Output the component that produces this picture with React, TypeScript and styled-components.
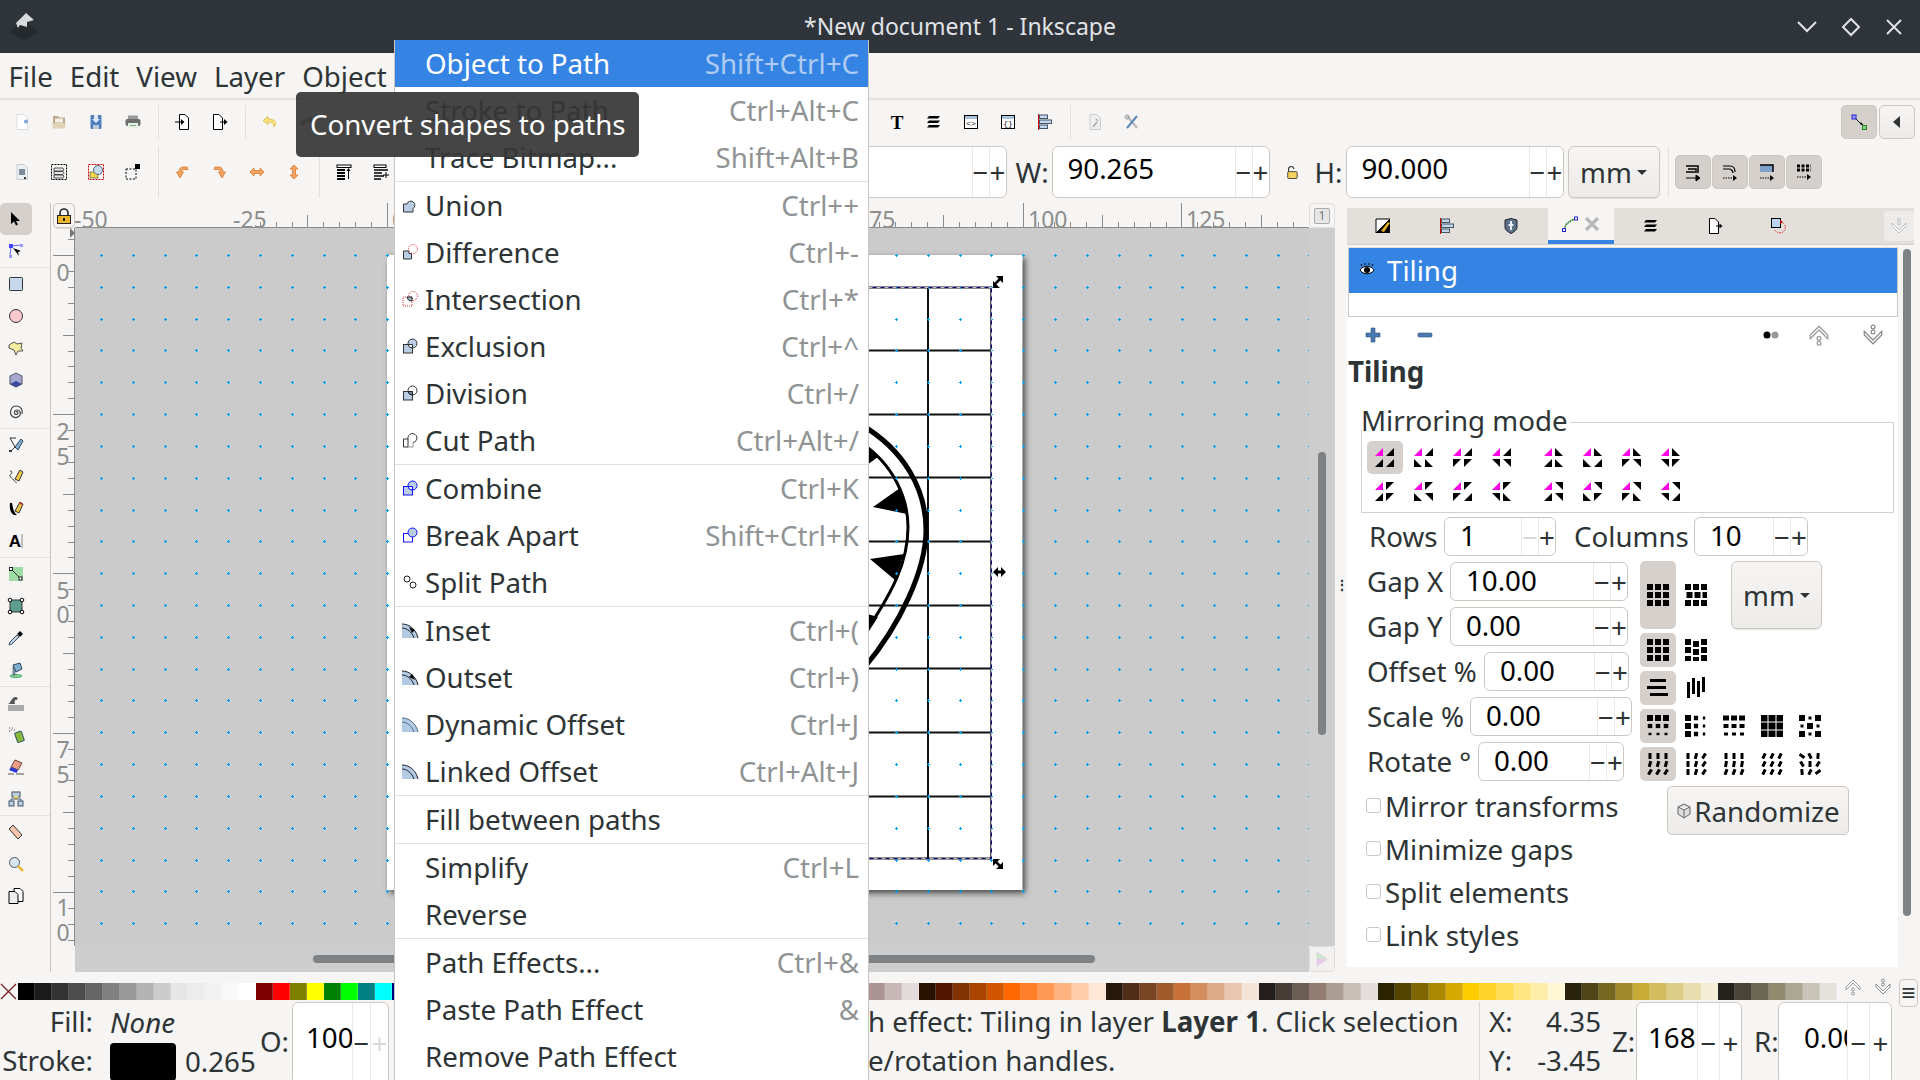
import React from "react";
import styled, {createGlobalStyle} from "styled-components";

const FONT = `"Noto Sans", "Open Sans", sans-serif`;
const TEXT = "#2e3436";
const BG = "#f6f5f4";
const BORDER = "#cdc7c2";
const BLUE = "#3584e4";

const paper = "M3 .5h7L13.5 4v11.5H3z";
const docLine = "M4.5.5H10L13.5 4v11.5h-9z";
const win = (label: string) => <>
    <rect x="1.5" y="1.5" width="13" height="13" fill="#fff" stroke="#000"/>
    <rect x="2" y="2" width="12" height="3" fill="#a9c3de"/>
    <text x="8" y="12" fontSize="8" fontFamily="Liberation Mono" textAnchor="middle" fill="#222">{label}</text>
</>;
const stack = <>
    <path d="M3 2h11l-2 2.5H1z" fill="#000"/>
    <path d="M3 6.5h11l-2 2.5H1z" fill="#000"/>
    <path d="M3 11h11l-2 2.5H1z" fill="#000"/>
</>;
const alignBars = <>
    <path d="M1.5 0v16" stroke="#c00" fill="none"/>
    <rect x="2.5" y="1" width="8" height="3.5" fill="#c3d7ec" stroke="#456"/>
    <rect x="2.5" y="6" width="12" height="3.5" fill="#c3d7ec" stroke="#456"/>
    <rect x="2.5" y="11" width="8" height="3.5" fill="#c3d7ec" stroke="#456"/>
</>;
const arcs = (dark: string, extra?: React.ReactNode) => <>
    <path d="M0 2c7 0 14 5 16 14H0z" fill="#b3cae3"/>
    <path d="M0 2c7 0 14 5 16 14M0 6c5 0 10 4 12 10" fill="none" stroke={dark} strokeWidth="1"/>
    {extra}
</>;
const orange = {fill: "#f4a460", stroke: "#d9782d", strokeWidth: .8};
const bucket = <>
    <path d="M5 3l7-2 2 6-6 3z" fill="#7fb0d6" stroke="#345"/>
    <ellipse cx="8" cy="14" rx="6" ry="1.5" fill="#8fd18f" stroke="#4a7"/>
    <path d="M5 5v8h2V8z" fill="#8ab" stroke="#345" strokeWidth=".6"/>
</>;

const icons: Record<string, React.ReactNode> = {
    new: <><path d={paper} fill="#fff" stroke="#ddd"/><circle cx="12" cy="7.5" r="2" fill="#7fa5d4"/></>,
    open: <><path d="M2 2h5l1 1.5h6v10H2z" fill="#bba98a"/><rect x="4" y="4.5" width="8" height="4" fill="#f2efe8"/><path d="M1 9h14l-1 5.5H2z" fill="#e0d2b8"/></>,
    save: <><rect x="2.5" y="1" width="11" height="14" rx="1" fill="#4f81bd"/><path d="M6 1h4v4h2L8 9 4 5h2z" fill="#dfe9f5"/><rect x="5" y="11" width="6" height="4" fill="#bcd"/></>,
    print: <><rect x="3" y="1.5" width="10" height="4" fill="#9a9a9a"/><rect x=".5" y="5" width="15" height="7" rx="2" fill="#6d6d6d"/><rect x="3" y="9" width="10" height="5" fill="#e6efe4"/><rect x="5" y="11" width="6" height="1" fill="#7aa874"/></>,
    import: <><path d={docLine} fill="#fff" stroke="#000"/><path d="M0 8h7" stroke="#000"/><path d="M6 5l3.5 3L6 11z" fill="#000"/></>,
    export: <><path d="M1.5.5H7L10.5 4v11.5h-9z" fill="#fff" stroke="#000"/><path d="M8 8h5" stroke="#000"/><path d="M12 5l3.5 3-3.500 3z" fill="#000"/></>,
    undo: <path d="M6 2.500L1 6.500l5 4V8c4 0 6 1.500 6 5 3.500-4 1.500-8-6-8z" fill="#f7e27c" stroke="#d9b84a" strokeWidth=".8"/>,
    redo: <path d="M10 2.500l5 4-5 4V8c-4 0-6 1.500-6 5C.5 9 2.500 5 10 5z" fill="#7a7a4a"/>,
    page: <><path d={paper} fill="#eef1f4" stroke="#c8ccd0"/><rect x="5" y="5" width="6" height="6" fill="#7d8a97"/><rect x="10" y="13" width="2" height="2" fill="#333"/></>,
    selAll: <><rect x=".5" y=".5" width="15" height="15" fill="none" stroke="#000" strokeDasharray="2 1"/><path d="M3 4h9l1 2-1 1H3zM3 7.500h9l1 2-1 1H3zM3 11h9l1 1-1 2H3z" fill="#e6e6e6" stroke="#333" strokeWidth=".8"/></>,
    selSame: <><rect x=".5" y=".5" width="15" height="15" fill="#fff" stroke="#c00" strokeDasharray="2 1"/><rect x="2" y="8" width="8" height="6" fill="#f7d84a" stroke="#333" strokeWidth=".6"/><circle cx="10" cy="6" r="4.500" fill="#c7dcef" stroke="#567"/></>,
    deselect: <><rect x="1" y="5" width="10" height="10" fill="none" stroke="#000" strokeDasharray="2 1.500"/><rect x="10" y="0" width="5" height="5" fill="#000"/></>,
    rotL: <path d="M12 3H8C5.500 3 4 5 4 8H1.500L5 14l3.500-6H6.500c0-1.500 1-2.500 2-2.500H13z" {...orange}/>,
    rotR: <path d="M3 3h4c2.500 0 4 2 4 5h2.500L10 14 6.500 8h2c0-1.500-1-2.500-2-2.500H2z" {...orange}/>,
    flipH: <path d="M1 8l4-4v2.500h6V4l4 4-4 4V9.500H5V12z" {...orange}/>,
    flipV: <path d="M8 1l4 4H9.500v6H12l-4 4-4-4h2.500V5H4z" {...orange}/>,
    top: <><rect x="1" y="1" width="14" height="2.500" fill="#fff" stroke="#000"/><path d="M1 6h8M1 9h8M1 12h8M1 15h8" stroke="#000" strokeWidth="2"/><path d="M12.500 15V6" stroke="#000"/><path d="M10.500 7l2-3 2 3z" fill="#000"/></>,
    up: <><rect x="1" y="1" width="12" height="2.500" fill="#fff" stroke="#000"/><path d="M1 6h14M1 9h8M1 12h10M1 15h7" stroke="#000" strokeWidth="1.500"/><path d="M13 8v6M10 11h6" stroke="#000"/></>,
    text: <text x="8" y="14.500" fontSize="19" fontWeight="700" fontFamily="Liberation Serif" textAnchor="middle" fill="#000">T</text>,
    layers: stack,
    xml: win("<>"),
    css: win("{}"),
    align: alignBars,
    docProp: <><path d={paper} fill="#eee" stroke="#ccc"/><path d="M6 13l4-5M9 5l2 2" stroke="#aaa" strokeWidth="1.500"/></>,
    tools: <><path d="M3 2l10 12" stroke="#bbb" strokeWidth="2.500"/><path d="M13 2L3 14" stroke="#5d86b8" strokeWidth="2"/><circle cx="3" cy="3" r="2" fill="none" stroke="#999"/></>,
    snap: <><path d="M3 3l9 9" stroke="#000" strokeWidth="1"/><path d="M10 8l3 4-4-2z" fill="#000"/><rect x="1" y="1" width="4" height="4" fill="#99f" stroke="#22c"/><rect x="11.500" y="11.500" width="4" height="4" fill="#8c8" stroke="#282"/></>,
    back: <path d="M11 2v12L4 8z" fill="#2e3436"/>,
    cornerA: <><path d="M1 2h12v7M3 5h8v4M1 8h9" fill="none" stroke="#000" strokeWidth="1.500"/><path d="M1 14h12M11 11l4 3-4 3z" stroke="#000"/></>,
    cornerB: <><path d="M1 2h7c3 0 5 2 5 6M1 5h6c2 0 4 2 4 4" fill="none" stroke="#000" strokeWidth="1.200"/><path d="M1 14h12" stroke="#000" strokeDasharray="1.500 1"/><path d="M11 11l4 3-4 3z" fill="#000"/></>,
    cornerC: <><path d="M1 1h13v7H1z" fill="#7da0c8"/><path d="M1 1h13v7" fill="none" stroke="#000" strokeWidth="1.500"/><path d="M1 14h12" stroke="#000" strokeDasharray="1.500 1"/><path d="M11 11l4 3-4 3z" fill="#000"/></>,
    cornerD: <><path d="M1 2h14M1 6h14" stroke="#000" strokeWidth="3" strokeDasharray="3 1.500"/><path d="M1 13h12" stroke="#000" strokeDasharray="1.500 1"/><path d="M11 10l4 3-4 3z" fill="#000"/></>,
    tabFill: <><path d="M1 1h14L1 15z" fill="#fff" stroke="#000"/><path d="M15 1v14H1z" fill="#000"/><path d="M6 13l7-9 2 1-6 9z" fill="#e6b422"/></>,
    tabShield: <><path d="M2 2l6-1.500L14 2v7c0 3-3 5-6 6.500C5 14 2 12 2 9z" fill="#5c7085" stroke="#223"/><path d="M8 3v9M5.500 7h5" stroke="#e8eef4" strokeWidth="2"/></>,
    tabLpe: <><path d="M2 14C3 8 8 4 14 3" fill="none" stroke="#2e7d32" strokeWidth="1.500" strokeDasharray="2 .6"/><rect x=".5" y="12.500" width="3" height="3" fill="#fff" stroke="#22c"/><rect x="12.500" y="1" width="3" height="3" fill="#fff" stroke="#22c"/></>,
    close: <path d="M2 2l12 12M14 2L2 14" stroke="#b9b9b9" strokeWidth="3.500"/>,
    tabExport: <><path d="M2.500.5H8L11.500 4v11.500h-9z" fill="#fff" stroke="#000"/><path d="M9 8h4" stroke="#000"/><path d="M12.500 5.500l3 2.500-3 2.500z" fill="#000"/></>,
    tabTrans: <><rect x=".5" y=".5" width="9" height="9" fill="#bcd6f0" stroke="#000"/><path d="M10 4a5.500 5.500 0 1 1-6 8" fill="none" stroke="#d22" strokeDasharray="1.500 1"/><path d="M9 2l3 2-3 2z" fill="#c00"/></>,
    down: <g fill="none" stroke="#bdbdbd"><circle cx="8" cy="1.500" r="1.500"/><circle cx="8" cy="5.500" r="1.500"/><path d="M1 5l7 7 7-7v3l-7 7-7-7z" fill="#fff"/></g>,
    upArrow: <g fill="none" stroke="#9a9a9a"><circle cx="8" cy="14.500" r="1.500"/><circle cx="8" cy="10.500" r="1.500"/><path d="M1 11l7-7 7 7V8L8 1 1 8z" fill="#fff"/></g>,
    downDark: <g fill="none" stroke="#8a8a8a"><circle cx="8" cy="1.500" r="1.500"/><circle cx="8" cy="5.500" r="1.500"/><path d="M1 5l7 7 7-7v3l-7 7-7-7z" fill="#fff"/></g>,
    plus: <path d="M6 1h4v5h5v4h-5v5H6v-5H1V6h5z" fill="#4a78b0" stroke="#32567f" strokeWidth=".6"/>,
    minus: <rect x="1" y="6" width="14" height="4" rx="1" fill="#4a78b0" stroke="#32567f" strokeWidth=".6"/>,
    dots: <><circle cx="4" cy="8" r="3.500" fill="#000"/><circle cx="12" cy="8" r="3.500" fill="#999"/></>,
    eye: <><path d="M1 8c3-5 11-5 14 0-3 5-11 5-14 0z" fill="#fff" stroke="#000"/><circle cx="8" cy="8" r="3" fill="#000"/><path d="M3 4L2 2M6 3V1M10 3V1M13 4l1-2" stroke="#000"/></>,
    selTool: <path d="M3 1v12l3-2.500 2 4 2-1-2-3.500h4z" fill="#000"/>,
    nodeTool: <><path d="M3 3l10-1M3 3L2 13" stroke="#66f"/><rect x="1" y="1" width="4" height="4" fill="#44f"/><rect x="12" y="1" width="3" height="3" fill="#99f"/><rect x="1" y="12" width="3" height="3" fill="#99f"/><path d="M5 5l8 3-3 1 1 4z" fill="#000"/></>,
    rect: <><rect x="1.500" y="1.500" width="13" height="13" rx="1" fill="#c6d9ec" stroke="#333"/></>,
    ellipse: <circle cx="8" cy="8" r="6.500" fill="#f7c9cc" stroke="#333"/>,
    star: <path d="M1 5l5-3 3 2 5-1-1 5 2 3-5 0-2 4-2-5-5-2z" fill="#f6eda0" stroke="#555"/>,
    box3d: <><path d="M8 1l6 3v8l-6 3-6-3V4z" fill="#a5a8cf" stroke="#556"/><path d="M2 12l6-3 6 3-6 3z" fill="#3c4aa0"/></>,
    spiral: <path d="M8 8c1-1 2 0 2 1s-2 2-3 1-1-4 2-4 4 3 3 5-5 4-8 1S3 2 8 2s7 4 6 8" fill="none" stroke="#444" strokeWidth="1.200"/>,
    pencil: <><path d="M2 1h6M2 1l5 9-3 3" fill="none" stroke="#333"/><rect x="1" y="13" width="3" height="2" fill="#333"/><path d="M7 10l6-8 2 2-5 9z" fill="#7fb0d6" stroke="#345"/></>,
    pen: <><path d="M2 2c3 0 2 3 0 4s8 8 6 8" fill="none" stroke="#333"/><path d="M7 10l5-9 3 2-4 9z" fill="#f3c84a" stroke="#333"/></>,
    callig: <><path d="M2 2c-1 8 2 13 7 12-4-3-4-8-5-12z" fill="#000"/><path d="M7 10l5-9 3 2-4 9z" fill="#e8c24a" stroke="#333"/><path d="M12 1l3 2-1 1-3-2z" fill="#c33"/></>,
    a: <><text x="7" y="14" fontSize="17" fontWeight="700" fontFamily="Liberation Sans" textAnchor="middle" fill="#000">A</text><path d="M14 1v14" stroke="#888"/></>,
    grad: <><rect x="1" y="1" width="14" height="14" fill="#9fdca5"/><path d="M3 3l10 10" stroke="#333"/><rect x="1.500" y="1.500" width="3" height="3" fill="#fff" stroke="#222"/><rect x="11" y="11" width="3" height="3" fill="#fff" stroke="#222"/></>,
    mesh: <><rect x="2" y="2" width="12" height="12" fill="#5e9e8e" stroke="#333"/><circle cx="2" cy="2" r="1.800" fill="#fff" stroke="#000"/><circle cx="14" cy="2" r="1.800" fill="#fff" stroke="#000"/><circle cx="2" cy="14" r="1.800" fill="#fff" stroke="#000"/><circle cx="14" cy="14" r="1.800" fill="#fff" stroke="#000"/></>,
    dropper: <><path d="M1 15l1-3 7-7 2 2-7 7z" fill="#bcd" stroke="#456"/><path d="M9 4l3-3 3 3-3 3z" fill="#000"/></>,
    bucket,
    tweak: <><path d="M0 9c3-1 3-6 7-7 3 0 3 2 2 3-2-1-3 1-2 4" fill="#555"/><rect x="0" y="10" width="16" height="6" fill="#aaa"/></>,
    spray: <><rect x="8" y="5" width="7" height="10" rx="1" fill="#8ab83a" stroke="#356" transform="rotate(-20 11 10)"/><path d="M1 1h1M3 3h1M1 4h1M4 1h1M6 3h1" stroke="#444"/></>,
    eraser: <><path d="M7 1l7 3-4 7-7-3z" fill="#ec9e85" stroke="#643"/><path d="M3 8l7 3-1.500 3L1 11z" fill="#2a3ad8"/><path d="M0 15h6M8 15h8" stroke="#555"/></>,
    lpe: <><rect x="4" y="1" width="8" height="5" fill="#b8cfe6" stroke="#456"/><rect x="6" y="5" width="4" height="3" fill="#f2d36a"/><rect x="1" y="10" width="5" height="5" fill="#b8cfe6" stroke="#456"/><rect x="10" y="10" width="5" height="5" fill="#b8cfe6" stroke="#456"/><path d="M3 10V8h10v2" fill="none" stroke="#456"/></>,
    measure: <path d="M5 1l9 10-4 4L1 5z" fill="#f4c7ab" stroke="#333"/>,
    zoom: <><circle cx="6.500" cy="6.500" r="5" fill="#d7e6f2" stroke="#555"/><path d="M10 10l5 5" stroke="#e8b73c" strokeWidth="2.500"/></>,
    pages: <><path d="M6 .5h6l3 3v10H6z" fill="#fff" stroke="#000"/><path d="M1 3.500h6l3 3v9H1z" fill="#eee" stroke="#000"/></>,
    union: <path d="M1.500 7H5a4 4 0 1 1 6 4.500V15H1.500z" fill="#b9cde5" stroke="#333"/>,
    difference: <><path d="M1.500 7H7v2.500h2.500V15h-8z" fill="#b9cde5" stroke="#333"/><circle cx="11" cy="5" r="4.500" fill="#fff" stroke="#d33" strokeDasharray="1 1"/></>,
    intersection: <><rect x="1" y="6" width="9" height="9" fill="none" stroke="#d33" strokeDasharray="1 1"/><circle cx="11" cy="5" r="4.500" fill="none" stroke="#d33" strokeDasharray="1 1"/><path d="M5 6h5v4a5 5 0 0 1-5-4z" fill="#9db4cc" stroke="#222"/></>,
    exclusion: <><rect x="1.500" y="6.500" width="9" height="8.500" fill="#b9cde5" stroke="#333"/><circle cx="10.500" cy="5.500" r="4.500" fill="#b9cde5" stroke="#333"/><path d="M6 6.500h4.500V10A4.500 4.500 0 0 1 6 6.500z" fill="#fff" stroke="#333"/></>,
    division: <><rect x="1.500" y="6.500" width="9" height="8.500" fill="#b9cde5" stroke="#333"/><circle cx="10.500" cy="5.500" r="4.500" fill="#fff" stroke="#333"/><path d="M6 6.500h4.500V10A4.500 4.500 0 0 1 6 6.500z" fill="#6f87a6" stroke="#222"/></>,
    cutPath: <><path d="M1.500 7H6v8H1.500z" fill="#fff" stroke="#333"/><path d="M6 7a4.500 4.500 0 1 1 5 3.500" fill="none" stroke="#333"/><path d="M6 15h5v-4" fill="none" stroke="#999"/></>,
    combine: <><rect x="1.500" y="6.500" width="9" height="8.500" fill="#b9cde5" stroke="#11f"/><circle cx="10.500" cy="5.500" r="4.500" fill="#b9cde5" stroke="#11f"/><path d="M6 6.500h4.500V10A4.500 4.500 0 0 1 6 6.500z" fill="#fff" stroke="#11f"/></>,
    breakApart: <><rect x="1.500" y="6.500" width="9" height="8.500" fill="#fff" stroke="#11f"/><circle cx="10.500" cy="5.500" r="4.500" fill="#b9cde5" stroke="#11f"/></>,
    split: <><circle cx="5" cy="5" r="3" fill="#fff" stroke="#222"/><circle cx="11" cy="11" r="3" fill="#fff" stroke="#222"/></>,
    inset: arcs("#222", <path d="M7 5l6 3-3 3z" fill="#000"/>),
    outset: arcs("#222", <path d="M13 11L7 8l3-3z" fill="#000"/>),
    dynamic: arcs("#4a6a90"),
    linked: arcs("#223"),
    randomize: <path d="M2 4l6-3 6 3v7l-6 4-6-4zM2 4l6 3 6-3M8 7v8" fill="#ddd" stroke="#666"/>,
};

// corners: a = lower right, b = lower left, c = upper left, d = upper right
const CORNERS: Record<string, string> = {
    a: "8,0 8,8 0,8",
    b: "0,0 8,8 0,8",
    c: "0,0 8,0 0,8",
    d: "0,0 8,0 8,8",
};

const MIRRORS = [
    "aaaa", "aabb", "aacc", "aadd", "abab", "abba", "abcd", "abdc",
    "acac", "acbd", "acca", "acdb", "adad", "adbc", "adcb", "adda",
];

function Mirror({code}: {code: string}) {
    const spots = [[0, 0], [11, 0], [0, 11], [11, 11]];
    return <svg width={20} height={20} viewBox="0 0 20 20">
        {spots.map((s, i) => <polygon key={i} points={CORNERS[code[i]]} fill={i === 0 ? "#ff00e6" : "#000"}
                                      transform={`translate(${s[0]} ${s[1]})`}/>)}
    </svg>;
}

type Cell = {x?: number; y?: number; w?: number; h?: number; r?: number};

function Tile({cell}: {cell: (col: number, row: number) => Cell}) {
    const parts = [];
    for (let row = 0; row < 3; row++) {
        for (let col = 0; col < 3; col++) {
            const c = cell(col, row);
            const w = c.w ?? 6;
            const h = c.h ?? 6;
            const x = col * 8 + 3 - w / 2 + (c.x ?? 0);
            const y = row * 8 + 3 - h / 2 + (c.y ?? 0);
            parts.push(<rect key={col + "-" + row} x={x} y={y} width={w} height={h} fill="#000"
                             transform={c.r ? `rotate(${c.r} ${x + w / 2} ${y + h / 2})` : undefined}/>);
        }
    }
    return <svg width={22} height={22} viewBox="0 0 22 22">{parts}</svg>;
}

const bar = {w: 3, h: 6};
const tiles = {
    plain: () => ({}),
    brickX: (_: number, r: number) => (r === 1 ? {x: 1.500} : {}),
    brickY: (c: number, r: number) => (c === 1 ? {y: 2} : r === 2 && c === 0 ? {x: 0, y: 1} : {}),
    rowScale: (_: number, r: number) => ({w: 6 - r * 1.500, h: 6 - r * 1.800}),
    colScale: (c: number) => ({w: 6 - c * 1.800, h: 6 - c * 1.500}),
    rowSmall: (_: number, r: number) => ({w: 6 - r, h: 5 - r}),
    big: () => ({w: 7, h: 7}),
    rand: (c: number, r: number) => ({w: (c + r) % 2 ? 3 : 6, h: (c + r) % 2 ? 3 : 6}),
    slash: (c: number, r: number) => ({...bar, r: r * 15}),
    slashCol: (c: number) => ({...bar, r: c * 15}),
    slashSmall: (_: number, r: number) => ({...bar, r: r * 10}),
    slashAll: () => ({...bar, r: 25}),
    slashRand: (c: number, r: number) => ({...bar, r: (c - 1) * 30 + (r - 1) * 25}),
};

function Centered() {
    return <svg width={22} height={22} viewBox="0 0 22 22">
        <rect x="3" y="2" width="16" height="3"/>
        <rect x="0" y="9" width="19" height="3"/>
        <rect x="3" y="16" width="18" height="3"/>
    </svg>;
}

function Columned() {
    return <svg width={22} height={22} viewBox="0 0 22 22">
        <rect x="2" y="5" width="3" height="16"/>
        <rect x="7" y="1" width="3" height="16"/>
        <rect x="12" y="4" width="3" height="16"/>
        <rect x="17" y="0" width="3" height="15"/>
    </svg>;
}

const Ic = ({n, s = 16}: {n: string; s?: number}) =>
    <svg width={s} height={s} viewBox="0 0 16 16" style={{overflow: "visible"}}>{icons[n]}</svg>;

const PALETTE = [
    "000000", "1a1a1a", "333333", "4d4d4d", "666666", "808080", "999999", "b3b3b3", "cccccc", "e6e6e6", "ececec",
    "f2f2f2", "f9f9f9", "ffffff", "800000", "ff0000", "808000", "ffff00", "008000", "00ff00", "008080", "00ffff",
    "000080", "0000ff", "800080", "ff00ff", "2b0000", "550000", "800000", "aa0000", "d40000", "ff0000", "ff2a2a",
    "ff5555", "ff8080", "ffaaaa", "ffd5d5", "280b0b", "501616", "782121", "a02c2c", "c83737", "d35f5f", "de8787",
    "e9afaf", "f4d7d7", "241c1c", "483737", "6c5353", "917c6f", "ac9393", "c8b7b7", "e3dbdb", "2b1100", "501600",
    "803300", "aa4400", "d45500", "ff6600", "ff7f2a", "ff9955", "ffb380", "ffccaa", "ffe6d5", "28170b", "502d16",
    "784421", "a05a2c", "c87137", "d38d5f", "deaa87", "e9c6af", "f4e3d7", "241f1c", "483e37", "6c5d53", "917c6f",
    "ac9d93", "c8beb7", "e3dedb", "2b2200", "554400", "806600", "aa8800", "d4aa00", "ffcc00", "ffd42a", "ffdd55",
    "ffe680", "ffeeaa", "fff6d5", "28220b", "504416", "786721", "a0892c", "c8ab37", "d3bc5f", "decd87", "e9ddaf",
    "f4eed7", "24221c", "484537", "6c6753", "918a6f", "aca793", "c8c4b7", "e3e2db",
];

type MenuEntry = {label?: string; keys?: string; icon?: string; active?: boolean; sep?: boolean};

const MENU: MenuEntry[] = [
    {label: "Object to Path", keys: "Shift+Ctrl+C", active: true},
    {label: "Stroke to Path", keys: "Ctrl+Alt+C"},
    {label: "Trace Bitmap...", keys: "Shift+Alt+B"},
    {sep: true},
    {label: "Union", keys: "Ctrl++", icon: "union"},
    {label: "Difference", keys: "Ctrl+-", icon: "difference"},
    {label: "Intersection", keys: "Ctrl+*", icon: "intersection"},
    {label: "Exclusion", keys: "Ctrl+^", icon: "exclusion"},
    {label: "Division", keys: "Ctrl+/", icon: "division"},
    {label: "Cut Path", keys: "Ctrl+Alt+/", icon: "cutPath"},
    {sep: true},
    {label: "Combine", keys: "Ctrl+K", icon: "combine"},
    {label: "Break Apart", keys: "Shift+Ctrl+K", icon: "breakApart"},
    {label: "Split Path", icon: "split"},
    {sep: true},
    {label: "Inset", keys: "Ctrl+(", icon: "inset"},
    {label: "Outset", keys: "Ctrl+)", icon: "outset"},
    {label: "Dynamic Offset", keys: "Ctrl+J", icon: "dynamic"},
    {label: "Linked Offset", keys: "Ctrl+Alt+J", icon: "linked"},
    {sep: true},
    {label: "Fill between paths"},
    {sep: true},
    {label: "Simplify", keys: "Ctrl+L"},
    {label: "Reverse"},
    {sep: true},
    {label: "Path Effects...", keys: "Ctrl+&"},
    {label: "Paste Path Effect", keys: "&"},
    {label: "Remove Path Effect"},
];

const TOOL_GROUPS = [
    ["selTool", "nodeTool"],
    ["rect", "ellipse", "star", "box3d", "spiral"],
    ["pencil", "pen", "callig", "a"],
    ["grad", "mesh", "dropper", "bucket"],
    ["tweak", "spray", "eraser", "lpe"],
    ["measure", "zoom", "pages"],
];

function Spin({w, h = 39, value, off, pad = 15, btn = 17}: {w: number; h?: number; value: string; off?: boolean; pad?: number; btn?: number}) {
    return <SpinBox $w={w} $h={h}>
        <SpinEntry $h={h} $pad={pad}>{value}</SpinEntry>
        <SpinBtn $w={btn} $off={off && h < 60}>−</SpinBtn>
        <SpinBtn $w={btn} $off={off && h > 60}>+</SpinBtn>
    </SpinBox>;
}

function HorizontalRuler() {
    const lines = [];
    for (let k = -48; k <= 46; k++) {
        const x = Math.round(1022.5 + k * 15.89) + .5;
        const len = k % 10 === 0 ? 25 : k % 5 === 0 ? 13 : 6;
        lines.push(<line key={k} x1={x} x2={x} y1={228 - len} y2={228} stroke="#8b8b8b"/>);
    }
    const labels = [[-50, 69], [-25, 228], [0, 387], [25, 546], [50, 705], [75, 864], [100, 1023], [125, 1181]];
    return <svg width={1234} height={25} viewBox="75 203 1234 25" style={{display: "block"}}>
        {lines}
        <line x1={75} x2={1309} y1={227.5} y2={227.5} stroke="#8b8b8b"/>
        {labels.map(l => <text key={l[0]} x={l[1] + 5} y={228} fontSize={23} fontFamily={FONT} fill="#8c8e8e">{l[0]}</text>)}
    </svg>;
}

function VerticalRuler() {
    const lines = [];
    for (let k = -1; k <= 44; k++) {
        const y = Math.round(255 + k * 15.92) + .5;
        const x1 = k % 10 === 0 ? 53 : k % 5 === 0 ? 63 : 68;
        lines.push(<line key={k} x1={x1} x2={74} y1={y} y2={y} stroke="#8b8b8b"/>);
    }
    const digits = [["0", 281], ["2", 440], ["5", 465], ["5", 599], ["0", 623], ["7", 758], ["5", 783], ["1", 916], ["0", 941]];
    return <svg width={24} height={718} viewBox="51 228 24 718" style={{display: "block"}}>
        {lines}
        <line x1={74.500} x2={74.500} y1={228} y2={946} stroke="#8b8b8b"/>
        <path d="M70 228l5 5-5 5z" fill="#777"/>
        {digits.map((d, i) => <text key={i} x={63} y={d[1]} fontSize={23} fontFamily={FONT} textAnchor="middle"
                                    fill="#8c8e8e">{d[0]}</text>)}
    </svg>;
}

function Drawing() {
    let grid = "";
    for (let c = 0; c < 39; c++) {
        for (let r = 0; r < 23; r++) {
            const x = Math.round(101 + c * 31.8) + .5;
            const y = Math.round(255 + r * 31.82) + .5;
            grid += `M${x - 1.500} ${y}h3M${x} ${y - 1.500}v3`;
        }
    }
    const rows = [287, 350, 414, 477, 541, 605, 668, 732, 796, 858];
    return <svg width={1234} height={718} viewBox="75 228 1234 718" style={{display: "block"}}>
        <defs>
            <filter id="pageShadow" x="-5%" y="-5%" width="110%" height="110%">
                <feGaussianBlur stdDeviation="3"/>
            </filter>
        </defs>
        <rect x={75} y={228} width={1234} height={718} fill="#cbcbcb"/>
        <rect x={390} y={258} width={635} height={635} fill="#444" filter="url(#pageShadow)"/>
        <rect x={387} y={255} width={635.500} height={635} fill="#fff"/>
        {rows.map(y => <line key={y} x1={400} x2={991} y1={y + .5} y2={y + .5} stroke="#111" strokeWidth="2"/>)}
        <line x1={928} x2={928} y1={287} y2={858} stroke="#111" strokeWidth="2"/>
        <line x1={991} x2={991} y1={287} y2={858} stroke="#111" strokeWidth="1.500"/>
        <path d="M860 424C905 450 926 490 926 530C926 570 900 625 864 668" fill="none" stroke="#000" strokeWidth="5"/>
        <path d="M860 442C895 465 908 500 908 527C908 560 895 590 860 640" fill="none" stroke="#000" strokeWidth="3"/>
        <path d="M873 507L900 488L907 514z M870 559L904 554L895 580z M860 440L878 457L860 470z M860 612L878 617L860 645z"/>
        <path d={grid} stroke="#009fe8" fill="none" strokeWidth="1" shapeRendering="crispEdges"/>
        <rect x={400.500} y={287.500} width={591} height={571} fill="none" stroke="#bdbdbd"/>
        <rect x={400.500} y={287.500} width={591} height={571} fill="none" stroke="#00007a" strokeDasharray="4 4"/>
        <g fill="#000" stroke="#000">
            <path d="M995 284l6-6" fill="none" strokeWidth="2.500"/>
            <path d="M993 288v-7l7 7zM1003 276v7l-7-7z" stroke="none"/>
            <path d="M997 572h5" strokeWidth="3"/>
            <path d="M998 567l-5 5 5 5zM1001 567l5 5-5 5z" stroke="none"/>
            <path d="M995 861l6 6" fill="none" strokeWidth="2.500"/>
            <path d="M993 859v7l7-7zM1003 869v-7l-7 7z" stroke="none"/>
        </g>
    </svg>;
}

export default function App() {
    return <Page>
        <GlobalStyle/>
        <TitleBar>
            <AppLogo>
                <svg width={32} height={32} viewBox="0 0 32 32">
                    <path d="M16 10l15 12-15 9L1 22z" fill="#252a2f"/>
                    <path d="M18 3l8 7-7 2v5l-7-2-2 3-2-5z" fill="#d8dadb"/>
                </svg>
            </AppLogo>
            <Title>*New document 1 - Inkscape</Title>
            <WindowControls>
                <svg width={20} height={12} viewBox="0 0 20 12"><path d="M1 1l9 9 9-9" fill="none" stroke="#dfe3e8" strokeWidth="2"/></svg>
                <svg width={20} height={20} viewBox="0 0 20 20"><path d="M10 2l8 8-8 8-8-8z" fill="none" stroke="#dfe3e8" strokeWidth="2"/></svg>
                <svg width={18} height={18} viewBox="0 0 18 18"><path d="M2 2l14 14M16 2L2 16" fill="none" stroke="#dfe3e8" strokeWidth="2"/></svg>
            </WindowControls>
        </TitleBar>
        <MenuBar>
            {["File", "Edit", "View", "Layer", "Object"].map(m => <MenuTitle key={m}>{m}</MenuTitle>)}
        </MenuBar>
        <CommandRow>
            {["new", "open", "save", "print"].map(n => <ToolBtn key={n}><Ic n={n}/></ToolBtn>)}
            <BarSep/>
            {["import", "export"].map(n => <ToolBtn key={n}><Ic n={n}/></ToolBtn>)}
            <BarSep/>
            {["undo", "redo"].map(n => <ToolBtn key={n}><Ic n={n}/></ToolBtn>)}
            <BarSep/>
            <Gap $w={540}/>
            {["text", "layers", "xml", "css", "align"].map(n => <ToolBtn key={n}><Ic n={n}/></ToolBtn>)}
            <BarSep/>
            {["docProp", "tools"].map(n => <ToolBtn key={n}><Ic n={n}/></ToolBtn>)}
            <PushRight>
                <Toggle $on><Ic n="snap"/></Toggle>
                <Toggle><Ic n="back"/></Toggle>
            </PushRight>
        </CommandRow>
        <SelectRow>
            {["page", "selAll", "selSame", "deselect"].map(n => <SelBtn key={n}><Ic n={n}/></SelBtn>)}
            <TallSep/>
            {["rotL", "rotR", "flipH", "flipV"].map(n => <SelBtn key={n}><Ic n={n}/></SelBtn>)}
            <TallSep/>
            {["top", "up"].map(n => <SelBtn key={n}><Ic n={n}/></SelBtn>)}
            <Gap $w={389}/>
            <Spin w={218} h={52} value="0.0"/>
            <FieldLabel $w={36} $ml={9}>W:</FieldLabel>
            <Spin w={218} h={52} value="90.265"/>
            <LockCell>
                <svg width={12} height={15} viewBox="0 0 14 16">
                    <path d="M3 7V4a3 3 0 0 1 6 0" fill="none" stroke="#333" strokeWidth="1.300"/>
                    <rect x="2" y="7" width="11" height="8" rx="1" fill="#f4d35e" stroke="#333"/>
                </svg>
            </LockCell>
            <FieldLabel $w={31} $ml={1}>H:</FieldLabel>
            <Spin w={218} h={52} value="90.000"/>
            <UnitBtn $w={92} $h={52} $ml={4}>mm<Caret/></UnitBtn>
            <Gap $w={2}/>
            <TallSep/>
            <CornerGroup>
                {["cornerA", "cornerB", "cornerC", "cornerD"].map(n => <Toggle key={n} $on><Ic n={n}/></Toggle>)}
            </CornerGroup>
        </SelectRow>
        <Workspace>
            <ToolBox>
                {TOOL_GROUPS.map((group, g) => <ToolGroup key={g}>
                    {group.map(n => <ToolBoxBtn key={n} $on={n === "selTool"}><Ic n={n}/></ToolBoxBtn>)}
                </ToolGroup>)}
            </ToolBox>
            <CanvasGrid>
                <LockBtn>
                    <svg width={16} height={16} viewBox="0 0 16 16">
                        <path d="M4 8V5a4 4 0 0 1 8 0v3" fill="none" stroke="#222" strokeWidth="1.600"/>
                        <rect x="1.500" y="7.500" width="13" height="8" fill="#f0b429" stroke="#222"/>
                        <rect x="7" y="10" width="2" height="3" fill="#222"/>
                    </svg>
                </LockBtn>
                <HorizontalRuler/>
                <CornerBtn><CornerOne>1</CornerOne></CornerBtn>
                <VerticalRuler/>
                <Drawing/>
                <SideTrough><ThumbV/></SideTrough>
                <span/>
                <BottomTrough><ThumbH/></BottomTrough>
                <CmsBtn>
                    <svg width={14} height={18} viewBox="0 0 14 18">
                        <path d="M2 2l10 7-10 7z" fill="#cfe8d0" stroke="#d8d8d8"/>
                        <path d="M2 9l10 0-10 7z" fill="#e9c9ea"/>
                    </svg>
                </CmsBtn>
            </CanvasGrid>
            <Handle>⋮</Handle>
            <DockPanel>
                <TabBar>
                    <Tab><Ic n="tabFill"/></Tab>
                    <Tab><Ic n="align"/></Tab>
                    <Tab><Ic n="tabShield"/></Tab>
                    <ActiveTab><Ic n="tabLpe"/><Ic n="close"/></ActiveTab>
                    <Tab><Ic n="layers"/></Tab>
                    <Tab><Ic n="tabExport"/></Tab>
                    <Tab><Ic n="tabTrans"/></Tab>
                    <TabEnd><Ic n="down"/></TabEnd>
                </TabBar>
                <PanelScroll>
                    <PanelBody>
                        <EffectList>
                            <EffectRow><Ic n="eye"/>Tiling</EffectRow>
                        </EffectList>
                        <EffectTools>
                            <SmallBtn $w={52}><Ic n="plus"/></SmallBtn>
                            <SmallBtn $w={52}><Ic n="minus"/></SmallBtn>
                            <PushRight>
                                <SmallBtn $w={38}><Ic n="dots"/></SmallBtn>
                                <SmallBtn $w={54}><Ic n="upArrow" s={20}/></SmallBtn>
                                <SmallBtn $w={50}><Ic n="downDark" s={20}/></SmallBtn>
                            </PushRight>
                        </EffectTools>
                        <PanelTitle>Tiling</PanelTitle>
                        <MirrorFrame>
                            <Legend>Mirroring mode</Legend>
                            {[0, 8].map(start => <MirrorRow key={start}>
                                {MIRRORS.slice(start, start + 8).map((m, i) => <MirrorBtn key={m} $on={start + i === 0} $wide={i === 3}>
                                    <Mirror code={m}/>
                                </MirrorBtn>)}
                            </MirrorRow>)}
                        </MirrorFrame>
                        <CountRow>
                            <FormLabel $w={75}>Rows</FormLabel>
                            <Spin w={112} value="1" off/>
                            <FormLabel $w={120} $ml={18}>Columns</FormLabel>
                            <Spin w={114} value="10"/>
                        </CountRow>
                        <FormBlock>
                            <FormColumn>
                                <FormRow><FormLabel $w={83}>Gap X</FormLabel><Spin w={178} value="10.00"/></FormRow>
                                <FormRow><FormLabel $w={83}>Gap Y</FormLabel><Spin w={178} value="0.00"/></FormRow>
                                <FormRow><FormLabel $w={117}>Offset %</FormLabel><Spin w={145} value="0.00"/></FormRow>
                                <FormRow><FormLabel $w={103}>Scale %</FormLabel><Spin w={162} value="0.00"/></FormRow>
                                <FormRow><FormLabel $w={111}>Rotate °</FormLabel><Spin w={146} value="0.00"/></FormRow>
                            </FormColumn>
                            <TileColumn>
                                <TileRow $h={68}>
                                    <TileBtn $on><Tile cell={tiles.plain}/></TileBtn>
                                    <TileBtn><Tile cell={tiles.brickX}/></TileBtn>
                                    <UnitBtn $w={91} $h={68} $ml={15}>mm<Caret/></UnitBtn>
                                </TileRow>
                                <TileRow $h={34}>
                                    <TileBtn $on><Tile cell={tiles.plain}/></TileBtn>
                                    <TileBtn><Tile cell={tiles.brickY}/></TileBtn>
                                </TileRow>
                                <TileRow $h={34}>
                                    <TileBtn $on><Centered/></TileBtn>
                                    <TileBtn><Columned/></TileBtn>
                                </TileRow>
                                <TileRow $h={34}>
                                    <TileBtn $on><Tile cell={tiles.rowScale}/></TileBtn>
                                    <TileBtn><Tile cell={tiles.colScale}/></TileBtn>
                                    <TileBtn><Tile cell={tiles.rowSmall}/></TileBtn>
                                    <TileBtn><Tile cell={tiles.big}/></TileBtn>
                                    <TileBtn><Tile cell={tiles.rand}/></TileBtn>
                                </TileRow>
                                <TileRow $h={34}>
                                    <TileBtn $on><Tile cell={tiles.slash}/></TileBtn>
                                    <TileBtn><Tile cell={tiles.slashCol}/></TileBtn>
                                    <TileBtn><Tile cell={tiles.slashSmall}/></TileBtn>
                                    <TileBtn><Tile cell={tiles.slashAll}/></TileBtn>
                                    <TileBtn><Tile cell={tiles.slashRand}/></TileBtn>
                                </TileRow>
                            </TileColumn>
                        </FormBlock>
                        <CheckBlock>
                            <CheckList>
                                {["Mirror transforms", "Minimize gaps", "Split elements", "Link styles"].map(c =>
                                    <CheckRow key={c}><CheckBox/>{c}</CheckRow>)}
                            </CheckList>
                            <RandomBtn><Ic n="randomize"/>Randomize</RandomBtn>
                        </CheckBlock>
                    </PanelBody>
                    <PanelThumb/>
                </PanelScroll>
            </DockPanel>
        </Workspace>
        <PaletteBar>
            <NoColor>
                <svg width={17} height={17} viewBox="0 0 17 17" style={{display: "block"}}><path d="M1 1l15 15M16 1L1 16" stroke="#7a1f1f" strokeWidth="1.300"/></svg>
            </NoColor>
            {PALETTE.map((c, i) => <Swatch key={i} $c={c}/>)}
            <PaletteEnd>
                <Ic n="upArrow" s={16}/>
                <Ic n="downDark" s={16}/>
                <BurgerBtn>≡</BurgerBtn>
            </PaletteEnd>
        </PaletteBar>
        <StatusBar>
            <StyleGrid>
                <StyleLabel>Fill:</StyleLabel>
                <StyleValue><em>None</em></StyleValue>
                <StyleLabel>Stroke:</StyleLabel>
                <StyleValue><StrokeChip/>0.265</StyleValue>
            </StyleGrid>
            <StatusLabel $w={32}>O:</StatusLabel>
            <Spin w={97} h={82} value="100" off pad={13} btn={18}/>
            <Gap $w={479}/>
            <Message>
                <div>h effect: Tiling in layer <b>Layer 1</b>. Click selection</div>
                <div>e/rotation handles.</div>
            </Message>
            <Coords>
                <span>X:</span><CoordValue>4.35</CoordValue>
                <span>Y:</span><CoordValue>-3.45</CoordValue>
            </Coords>
            <StatusLabel $w={24} $ml={11}>Z:</StatusLabel>
            <Spin w={106} h={82} value="168" pad={11} btn={22}/>
            <StatusLabel $w={24} $ml={12}>R:</StatusLabel>
            <Spin w={114} h={82} value="0.00" pad={25} btn={22}/>
        </StatusBar>
        <Tooltip>Convert shapes to paths</Tooltip>
        <Menu>
            {MENU.map((m, i) => m.sep ? <MenuSep key={i}/> : <MenuRow key={i} $active={m.active}>
                <MenuIcon>{m.icon && <Ic n={m.icon}/>}</MenuIcon>
                <MenuLabel>{m.label}</MenuLabel>
                <MenuKeys $active={m.active}>{m.keys}</MenuKeys>
            </MenuRow>)}
        </Menu>
    </Page>;
}

const GlobalStyle = createGlobalStyle`
    html, body {
        margin: 0;
        padding: 0;
        background: ${BG};
    }
    * {
        box-sizing: border-box;
    }
`

const Page = styled.div`
    position: relative;
    width: 1920px;
    height: 1080px;
    overflow: hidden;
    display: flex;
    flex-direction: column;
    background: ${BG};
    color: ${TEXT};
    font-family: ${FONT};
    font-size: 27.7px;
`

const TitleBar = styled.div`
    height: 53px;
    flex: none;
    background: #2f343a;
    display: flex;
    align-items: center;
    justify-content: center;
    position: relative;
`

const AppLogo = styled.div`
    position: absolute;
    left: 8px;
    top: 10px;
`

const Title = styled.div`
    color: #e0e3e7;
    font-size: 23px;
    padding-bottom: 2px;
`

const WindowControls = styled.div`
    position: absolute;
    right: 17px;
    top: 17px;
    width: 106px;
    display: flex;
    align-items: center;
    justify-content: space-between;
`

const MenuBar = styled.div`
    height: 47px;
    flex: none;
    display: flex;
    align-items: center;
    border-bottom: 2px solid #e4e1de;
`

const MenuTitle = styled.div`
    padding: 0 8.5px;
`

const CommandRow = styled.div`
    height: 46px;
    flex: none;
    display: flex;
    align-items: center;
    padding: 0 5px 2px 3.5px;
`

const SelectRow = styled.div`
    height: 57px;
    flex: none;
    display: flex;
    align-items: flex-start;
    padding-left: 3.5px;
`

const ToolBtn = styled.div`
    width: 37px;
    height: 36px;
    display: flex;
    align-items: center;
    justify-content: center;
`

const SelBtn = styled(ToolBtn)`
    height: 52px;
`

const BarSep = styled.div`
    width: 1px;
    height: 34px;
    margin: 0 6px;
    background: #e4e1de;
`

const TallSep = styled(BarSep)`
    height: 52px;
`

const Gap = styled.div<{$w: number}>`
    width: ${p => p.$w}px;
    flex: none;
`

const PushRight = styled.div`
    margin-left: auto;
    display: flex;
    gap: 2px;
`

const Toggle = styled.div<{$on?: boolean}>`
    width: 36px;
    height: 34px;
    display: flex;
    align-items: center;
    justify-content: center;
    border-radius: 5px;
    border: 1px solid ${BORDER};
    background: ${p => p.$on ? "#d5d0cc" : "linear-gradient(#f6f5f4, #edebe9)"};
`

const CornerGroup = styled.div`
    display: flex;
    gap: 1px;
    margin-top: 9px;
`

const FieldLabel = styled.div<{$w: number; $ml: number}>`
    width: ${p => p.$w}px;
    margin-left: ${p => p.$ml}px;
    height: 52px;
    line-height: 52px;
    flex: none;
`

const LockCell = styled.div`
    width: 44px;
    height: 52px;
    flex: none;
    display: flex;
    align-items: center;
    justify-content: center;
`

const SpinBox = styled.div<{$w: number; $h: number}>`
    width: ${p => p.$w}px;
    height: ${p => p.$h}px;
    flex: none;
    display: flex;
    background: #fff;
    border: 1px solid ${BORDER};
    border-radius: 6px;
`

const SpinEntry = styled.div<{$h: number; $pad: number}>`
    flex: 1;
    min-width: 0;
    overflow: hidden;
    padding: 0 0 ${p => p.$h > 60 ? 13 : p.$h > 45 ? 9 : 3}px ${p => p.$pad}px;
    display: flex;
    align-items: center;
    color: #000;
    white-space: nowrap;
`

const SpinBtn = styled.div<{$w: number; $off?: boolean}>`
    width: ${p => p.$w}px;
    flex: none;
    display: flex;
    align-items: center;
    justify-content: center;
    border-left: 1px solid #eceae8;
    color: ${p => p.$off ? "#d8d8d8" : TEXT};
`

const UnitBtn = styled.div<{$w: number; $h: number; $ml: number}>`
    width: ${p => p.$w}px;
    height: ${p => p.$h}px;
    margin-left: ${p => p.$ml}px;
    flex: none;
    display: flex;
    align-items: center;
    justify-content: center;
    gap: 5px;
    border: 1px solid ${BORDER};
    border-radius: 6px;
    background: linear-gradient(#f6f5f4, #edebe9);
    box-shadow: 0 1px 1px #0000001a;
`

const Caret = styled.span`
    width: 0;
    height: 0;
    border: 5px solid transparent;
    border-top: 5px solid ${TEXT};
    border-bottom: 0;
`

const Workspace = styled.div`
    flex: none;
    height: 769px;
    display: flex;
`

const ToolBox = styled.div`
    width: 51px;
    flex: none;
    border-right: 1px solid #c9c5bd;
    display: flex;
    flex-direction: column;
`

const ToolGroup = styled.div`
    display: flex;
    flex-direction: column;
    border-bottom: 1px solid #e4e1de;
    &:last-child {
        border-bottom: 0;
    }
`

const ToolBoxBtn = styled.div<{$on?: boolean}>`
    width: 32px;
    height: 32px;
    display: flex;
    align-items: center;
    justify-content: center;
    border-radius: 5px;
    background: ${p => p.$on ? "#d5d0cc" : "transparent"};
`

const CanvasGrid = styled.div`
    display: grid;
    grid-template-columns: 24px 1234px 26px;
    grid-template-rows: 25px 718px 26px;
    flex: none;
`

const LockBtn = styled.div`
    margin-left: 2px;
    width: 22px;
    height: 25px;
    display: flex;
    align-items: center;
    justify-content: center;
    border: 1px solid ${BORDER};
    border-radius: 5px;
    box-shadow: 0 1px 1px #0000001a;
`

const CornerBtn = styled.div`
    display: flex;
    align-items: center;
    justify-content: center;
    border: 1px solid #e0ddda;
    border-radius: 4px;
`

const CornerOne = styled.div`
    width: 16px;
    height: 16px;
    border: 1px solid #aaa;
    border-radius: 2px;
    background: #e6e6e6;
    color: #777;
    font-size: 12px;
    line-height: 14px;
    text-align: center;
`

const SideTrough = styled.div`
    background: #cdcdcd;
    padding: 224px 0 0 9px;
`

const ThumbV = styled.div`
    width: 8px;
    height: 283px;
    border-radius: 4px;
    background: #7e8284;
`

const BottomTrough = styled.div`
    background: #cdcdcd;
    padding: 9px 0 0 238px;
`

const ThumbH = styled.div`
    width: 782px;
    height: 8px;
    border-radius: 4px;
    background: #7e8284;
`

const CmsBtn = styled.div`
    background: #f2f1f0;
    border: 1px solid #e0ddda;
    border-radius: 4px;
    display: flex;
    align-items: center;
    justify-content: center;
`

const Handle = styled.div`
    width: 12px;
    flex: none;
    font-size: 14px;
    font-weight: 700;
    text-align: center;
    padding-top: 372px;
    line-height: 20px;
`

const DockPanel = styled.div`
    width: 573px;
    flex: none;
    padding-top: 5px;
    display: flex;
    flex-direction: column;
`

const TabBar = styled.div`
    width: 567px;
    height: 37px;
    flex: none;
    display: flex;
    align-items: stretch;
    padding-left: 4px;
    background: #e3e0dc;
    border-bottom: 1px solid #d5d0cc;
`

const Tab = styled.div`
    width: 64px;
    display: flex;
    align-items: center;
    justify-content: center;
`

const ActiveTab = styled.div`
    width: 66px;
    margin-left: 5px;
    margin-right: 5px;
    display: flex;
    align-items: center;
    justify-content: center;
    gap: 6px;
    background: ${BG};
    border-bottom: 4px solid ${BLUE};
`

const TabEnd = styled.div`
    width: 30px;
    height: 30px;
    margin: 3px 0 0 auto;
    display: flex;
    align-items: center;
    justify-content: center;
    border-radius: 4px;
    background: #eeecea;
`

const PanelScroll = styled.div`
    display: flex;
    margin-top: 2px;
    height: 720px;
`

const PanelBody = styled.div`
    width: 551px;
    flex: none;
    background: #fff;
`

const PanelThumb = styled.div`
    width: 8px;
    height: 667px;
    margin: 2px 0 0 5px;
    border-radius: 4px;
    background: #7e8284;
`

const EffectList = styled.div`
    height: 70px;
    margin-left: 1px;
    background: #fff;
    border: 1px solid ${BORDER};
    border-top: 1px solid #e3e0dc;
`

const EffectRow = styled.div`
    height: 45px;
    padding: 0 0 2px 10px;
    display: flex;
    align-items: center;
    gap: 12px;
    background: ${BLUE};
    color: #fff;
`

const EffectTools = styled.div`
    height: 35px;
    display: flex;
    align-items: center;
`

const SmallBtn = styled.div<{$w: number}>`
    width: ${p => p.$w}px;
    display: flex;
    align-items: center;
    justify-content: center;
`

const PanelTitle = styled.div`
    height: 70px;
    padding-left: 1px;
    font-weight: 700;
    line-height: 38px;
`

const MirrorFrame = styled.div`
    width: 533px;
    height: 91px;
    margin-left: 14px;
    padding-top: 18px;
    border: 1px solid #d5d0cc;
`

const Legend = styled.div`
    width: fit-content;
    height: 20px;
    margin: -31px 0 11px -1px;
    padding-right: 2px;
    background: #fff;
    line-height: 20px;
`

const MirrorRow = styled.div`
    display: flex;
    height: 34px;
    padding-left: 5px;
`

const MirrorBtn = styled.div<{$on?: boolean; $wide?: boolean}>`
    width: 36px;
    height: 33px;
    margin-right: ${p => p.$wide ? "16px" : "3px"};
    display: flex;
    align-items: center;
    justify-content: center;
    border-radius: 5px;
    background: ${p => p.$on ? "#d5d0cc" : "transparent"};
`

const CountRow = styled.div`
    height: 39px;
    display: flex;
    align-items: center;
    margin: 4px 0 0 22px;
`

const FormLabel = styled.div<{$w: number; $ml?: number}>`
    width: ${p => p.$w}px;
    margin-left: ${p => p.$ml ?? 0}px;
    padding-bottom: 2px;
    flex: none;
    white-space: nowrap;
`

const FormBlock = styled.div`
    display: flex;
    margin: 6px 0 0 20px;
`

const FormColumn = styled.div`
    width: 273px;
    flex: none;
    display: flex;
    flex-direction: column;
    gap: 6px;
`

const FormRow = styled.div`
    height: 39px;
    display: flex;
    align-items: center;
`

const TileColumn = styled.div`
    display: flex;
    flex-direction: column;
    gap: 4px;
    margin-top: -1px;
`

const TileRow = styled.div<{$h: number}>`
    height: ${p => p.$h}px;
    display: flex;
    gap: 2px;
`

const TileBtn = styled.div<{$on?: boolean}>`
    width: 36px;
    display: flex;
    align-items: center;
    justify-content: center;
    border-radius: 5px;
    background: ${p => p.$on ? "#d5d0cc" : "transparent"};
`

const CheckBlock = styled.div`
    display: flex;
    margin-top: 4px;
`

const CheckList = styled.div`
    width: 320px;
    flex: none;
    padding-left: 19px;
`

const CheckRow = styled.div`
    height: 43px;
    padding-bottom: 2px;
    display: flex;
    align-items: center;
    gap: 4px;
`

const CheckBox = styled.span`
    width: 15px;
    height: 15px;
    border: 1px solid ${BORDER};
    border-radius: 3px;
    background: #fff;
    flex: none;
`

const RandomBtn = styled.div`
    width: 182px;
    height: 49px;
    margin-top: 1px;
    display: flex;
    align-items: center;
    justify-content: center;
    gap: 2px;
    border: 1px solid ${BORDER};
    border-radius: 5px;
    background: linear-gradient(#f6f5f4, #edebe9);
`

const PaletteBar = styled.div`
    height: 30px;
    flex: none;
    display: flex;
    padding-top: 11px;
`

const NoColor = styled.div`
    width: 18px;
    height: 17px;
    flex: none;
`

const Swatch = styled.div<{$c: string}>`
    width: 17px;
    height: 17px;
    flex: none;
    background: #${p => p.$c};
    border-right: 1px solid #ffffff33;
`

const PaletteEnd = styled.div`
    flex: 1;
    display: flex;
    align-items: flex-start;
    justify-content: flex-end;
    gap: 14px;
    margin-top: -4px;
    padding-right: 2px;
`

const BurgerBtn = styled.div`
    width: 19px;
    height: 28px;
    margin-left: -6px;
    border: 1px solid ${BORDER};
    border-radius: 4px;
    text-align: center;
    font-size: 24px;
    line-height: 24px;
`

const StatusBar = styled.div`
    flex: none;
    display: flex;
    height: 78px;
`

const StyleGrid = styled.div`
    width: 260px;
    flex: none;
    display: grid;
    grid-template-columns: 93px 1fr;
    grid-auto-rows: 39px;
    column-gap: 17px;
    white-space: nowrap;
`

const StyleLabel = styled.div`
    text-align: right;
`

const StyleValue = styled.div`
    display: flex;
    align-items: center;
    gap: 9px;
`

const StrokeChip = styled.span`
    width: 66px;
    height: 38px;
    margin-top: 2px;
    background: #000;
    border-radius: 4px;
`

const StatusLabel = styled.div<{$w: number; $ml?: number}>`
    width: ${p => p.$w}px;
    margin-left: ${p => p.$ml ?? 0}px;
    flex: none;
    line-height: 78px;
`

const Message = styled.div`
    width: 611px;
    flex: none;
    line-height: 39px;
    white-space: nowrap;
    overflow: hidden;
`

const Coords = styled.div`
    width: 122px;
    flex: none;
    border-left: 1px solid #dcd8d4;
    padding: 0 0 0 9px;
    display: grid;
    grid-template-columns: 36px 1fr;
    grid-auto-rows: 39px;
    line-height: 39px;
`

const CoordValue = styled.span`
    text-align: right;
`

const Tooltip = styled.div`
    position: absolute;
    z-index: 3;
    left: 296px;
    top: 92px;
    width: 343px;
    height: 65px;
    padding-left: 14px;
    border-radius: 5px;
    background: #353535eb;
    color: #fff;
    line-height: 64px;
    white-space: nowrap;
`

const Menu = styled.div`
    position: absolute;
    z-index: 2;
    left: 394px;
    top: 40px;
    width: 475px;
    height: 1040px;
    background: #fff;
    border-left: 1px solid #c9c5c1;
    border-right: 1px solid #c9c5c1;
    overflow: hidden;
`

const MenuRow = styled.div<{$active?: boolean}>`
    height: 47px;
    display: flex;
    align-items: center;
    padding: 0 9px 2px 7px;
    background: ${p => p.$active ? BLUE : "transparent"};
    color: ${p => p.$active ? "#fff" : TEXT};
`

const MenuIcon = styled.div`
    width: 23px;
    flex: none;
    display: flex;
    align-items: center;
`

const MenuLabel = styled.div`
    flex: 1;
    white-space: nowrap;
`

const MenuKeys = styled.div<{$active?: boolean}>`
    color: ${p => p.$active ? "#aecbf2" : "#8f9394"};
    white-space: nowrap;
`

const MenuSep = styled.div`
    height: 1px;
    background: #e4e1de;
`
